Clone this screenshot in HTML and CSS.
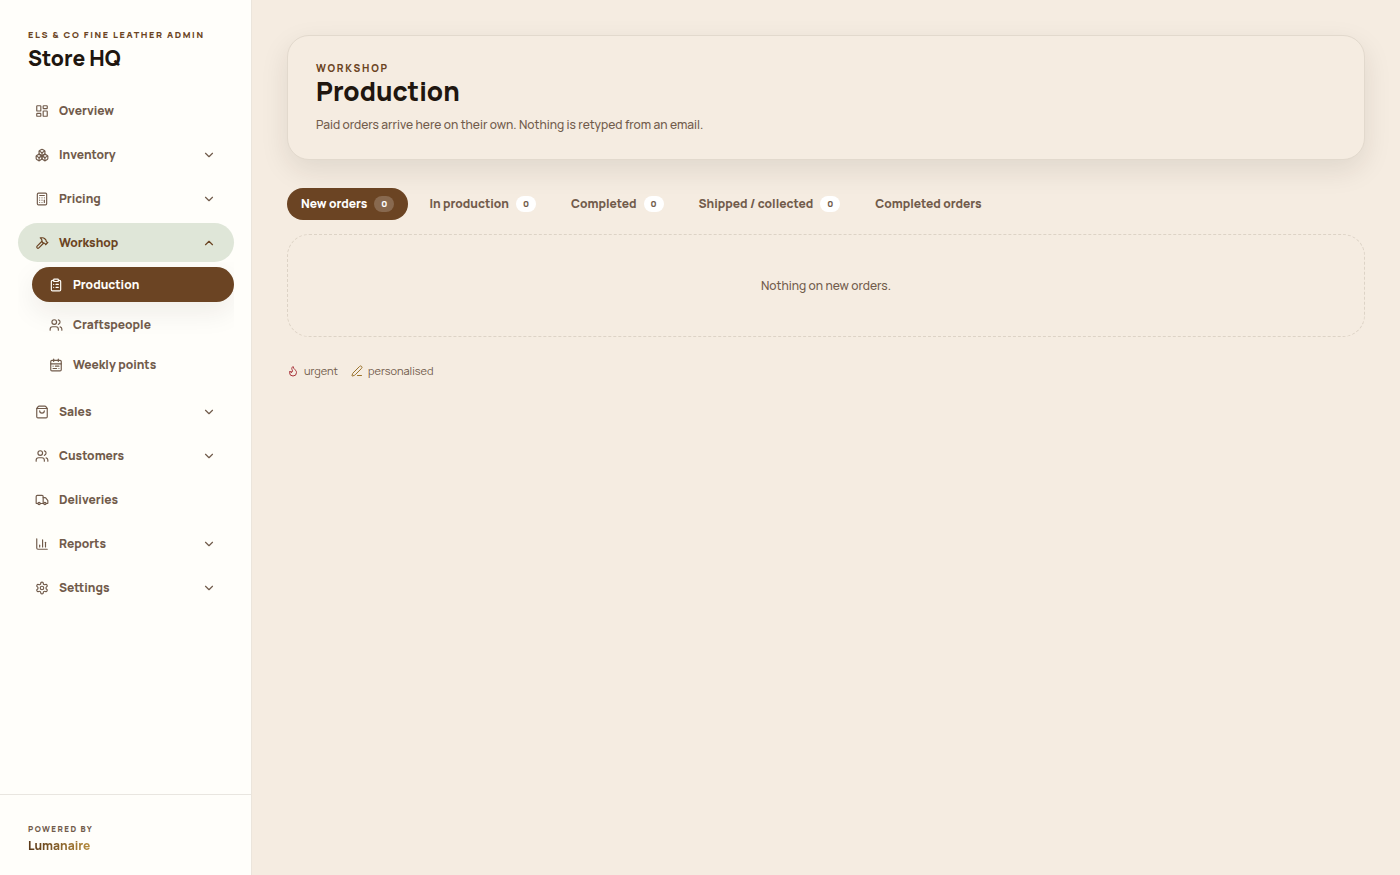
FILE: index.html
```html
<!DOCTYPE html>
<html lang="en">
<head>
  <meta charset="UTF-8">
  <meta name="viewport" content="width=device-width, initial-scale=1.0">
  <title>Production - Store HQ</title>
  <link rel="stylesheet" href="styles.css">
</head>
<body>
  <svg class="sprite" aria-hidden="true">
    <symbol id="i-down" viewBox="0 0 24 24"><path d="m6 9 6 6 6-6"/></symbol>
    <symbol id="i-up" viewBox="0 0 24 24"><path d="m18 15-6-6-6 6"/></symbol>
    <symbol id="i-users" viewBox="0 0 24 24"><path d="M16 21v-2a4 4 0 0 0-4-4H6a4 4 0 0 0-4 4v2"/><circle cx="9" cy="7" r="4"/><path d="M22 21v-2a4 4 0 0 0-3-3.87"/><path d="M16 3.13a4 4 0 0 1 0 7.75"/></symbol>
  </svg>

  <div class="layout">
    <aside class="sidebar">
      <div class="brand">
        <p class="eyebrow">Els &amp; Co Fine Leather Admin</p>
        <p class="brand-name">Store HQ</p>
      </div>

      <nav class="nav" aria-label="Main">
        <a class="nav-item" href="#">
          <svg class="icon" viewBox="0 0 24 24"><rect width="7" height="9" x="3" y="3" rx="1"/><rect width="7" height="5" x="14" y="3" rx="1"/><rect width="7" height="9" x="14" y="12" rx="1"/><rect width="7" height="5" x="3" y="16" rx="1"/></svg>
          <span>Overview</span>
        </a>
        <button class="nav-item" type="button" aria-expanded="false">
          <svg class="icon" viewBox="0 0 24 24"><path d="M2.97 12.92A2 2 0 0 0 2 14.63v3.24a2 2 0 0 0 .97 1.71l3 1.8a2 2 0 0 0 2.06 0L12 19v-5.5l-5-3-4.03 2.42Z"/><path d="m7 16.5-4.74-2.85"/><path d="m7 16.5 5-3"/><path d="M7 16.5v5.17"/><path d="M12 13.5V19l3.97 2.38a2 2 0 0 0 2.06 0l3-1.8a2 2 0 0 0 .97-1.71v-3.24a2 2 0 0 0-.97-1.71L17 10.5l-5 3Z"/><path d="m17 16.5-5-3"/><path d="m17 16.5 4.74-2.85"/><path d="M17 16.5v5.17"/><path d="M7.97 4.42A2 2 0 0 0 7 6.13v4.37l5 3 5-3V6.13a2 2 0 0 0-.97-1.71l-3-1.8a2 2 0 0 0-2.06 0l-3 1.8Z"/><path d="M12 8 7.26 5.15"/><path d="m12 8 4.74-2.85"/><path d="M12 13.5V8"/></svg>
          <span>Inventory</span>
          <svg class="icon chevron"><use href="#i-down"/></svg>
        </button>
        <button class="nav-item" type="button" aria-expanded="false">
          <svg class="icon" viewBox="0 0 24 24"><rect width="16" height="20" x="4" y="2" rx="2"/><path d="M8 6h8"/><path d="M16 14v4"/><path d="M16 10h.01"/><path d="M12 10h.01"/><path d="M8 10h.01"/><path d="M12 14h.01"/><path d="M8 14h.01"/><path d="M12 18h.01"/><path d="M8 18h.01"/></svg>
          <span>Pricing</span>
          <svg class="icon chevron"><use href="#i-down"/></svg>
        </button>
        <button class="nav-item open" type="button" aria-expanded="true">
          <svg class="icon" viewBox="0 0 24 24"><path d="m15 12-8.373 8.373a1 1 0 1 1-3-3L12 9"/><path d="m18 15 4-4"/><path d="m21.5 11.5-1.914-1.914A2 2 0 0 1 19 8.172V7l-2.26-2.26a6 6 0 0 0-4.202-1.756L9 2.96l.92.82A6.18 6.18 0 0 1 12 8.4V10l2 2h1.172a2 2 0 0 1 1.414.586L18.5 14.5"/></svg>
          <span>Workshop</span>
          <svg class="icon chevron"><use href="#i-up"/></svg>
        </button>
        <div class="subnav">
          <a class="nav-item sub active" href="#" aria-current="page">
            <svg class="icon" viewBox="0 0 24 24"><rect width="8" height="4" x="8" y="2" rx="1"/><path d="M16 4h2a2 2 0 0 1 2 2v14a2 2 0 0 1-2 2H6a2 2 0 0 1-2-2V6a2 2 0 0 1 2-2h2"/><path d="M12 11h4"/><path d="M12 16h4"/><path d="M8 11h.01"/><path d="M8 16h.01"/></svg>
            <span>Production</span>
          </a>
          <a class="nav-item sub" href="#">
            <svg class="icon"><use href="#i-users"/></svg>
            <span>Craftspeople</span>
          </a>
          <a class="nav-item sub" href="#">
            <svg class="icon" viewBox="0 0 24 24"><rect width="18" height="18" x="3" y="4" rx="2"/><path d="M16 2v4"/><path d="M3 10h18"/><path d="M8 2v4"/><path d="M17 14h-6"/><path d="M13 18H7"/><path d="M7 14h.01"/><path d="M17 18h.01"/></svg>
            <span>Weekly points</span>
          </a>
        </div>
        <button class="nav-item" type="button" aria-expanded="false">
          <svg class="icon" viewBox="0 0 24 24"><path d="M16 10a4 4 0 0 1-8 0"/><path d="M3.103 6.034h17.794"/><path d="M3.4 5.467a2 2 0 0 0-.4 1.2V20a2 2 0 0 0 2 2h14a2 2 0 0 0 2-2V6.667a2 2 0 0 0-.4-1.2l-2-2.667A2 2 0 0 0 17 2H7a2 2 0 0 0-1.6.8z"/></svg>
          <span>Sales</span>
          <svg class="icon chevron"><use href="#i-down"/></svg>
        </button>
        <button class="nav-item" type="button" aria-expanded="false">
          <svg class="icon"><use href="#i-users"/></svg>
          <span>Customers</span>
          <svg class="icon chevron"><use href="#i-down"/></svg>
        </button>
        <a class="nav-item" href="#">
          <svg class="icon" viewBox="0 0 24 24"><path d="M14 18V6a2 2 0 0 0-2-2H4a2 2 0 0 0-2 2v11a1 1 0 0 0 1 1h2"/><path d="M15 18H9"/><path d="M19 18h2a1 1 0 0 0 1-1v-3.65a1 1 0 0 0-.22-.624l-3.48-4.35A1 1 0 0 0 17.52 8H14"/><circle cx="17" cy="18" r="2"/><circle cx="7" cy="18" r="2"/></svg>
          <span>Deliveries</span>
        </a>
        <button class="nav-item" type="button" aria-expanded="false">
          <svg class="icon" viewBox="0 0 24 24"><path d="M3 3v16a2 2 0 0 0 2 2h16"/><path d="M18 17V9"/><path d="M13 17V5"/><path d="M8 17v-3"/></svg>
          <span>Reports</span>
          <svg class="icon chevron"><use href="#i-down"/></svg>
        </button>
        <button class="nav-item" type="button" aria-expanded="false">
          <svg class="icon" viewBox="0 0 24 24"><path d="M12.22 2h-.44a2 2 0 0 0-2 2v.18a2 2 0 0 1-1 1.73l-.43.25a2 2 0 0 1-2 0l-.15-.08a2 2 0 0 0-2.73.73l-.22.38a2 2 0 0 0 .73 2.73l.15.1a2 2 0 0 1 1 1.72v.51a2 2 0 0 1-1 1.74l-.15.09a2 2 0 0 0-.73 2.73l.22.38a2 2 0 0 0 2.73.73l.15-.08a2 2 0 0 1 2 0l.43.25a2 2 0 0 1 1 1.73V20a2 2 0 0 0 2 2h.44a2 2 0 0 0 2-2v-.18a2 2 0 0 1 1-1.73l.43-.25a2 2 0 0 1 2 0l.15.08a2 2 0 0 0 2.73-.73l.22-.39a2 2 0 0 0-.73-2.73l-.15-.08a2 2 0 0 1-1-1.74v-.5a2 2 0 0 1 1-1.74l.15-.09a2 2 0 0 0 .73-2.73l-.22-.38a2 2 0 0 0-2.73-.73l-.15.08a2 2 0 0 1-2 0l-.43-.25a2 2 0 0 1-1-1.73V4a2 2 0 0 0-2-2z"/><circle cx="12" cy="12" r="3"/></svg>
          <span>Settings</span>
          <svg class="icon chevron"><use href="#i-down"/></svg>
        </button>
      </nav>

      <div class="powered">
        <p class="powered-label">Powered by</p>
        <a class="powered-name" href="#">Lumanaire</a>
      </div>
    </aside>

    <main class="main">
      <header class="page-head">
        <p class="eyebrow large">Workshop</p>
        <h1>Production</h1>
        <p class="lead">Paid orders arrive here on their own. Nothing is retyped from an email.</p>
      </header>

      <div class="tabs">
        <button class="tab selected" type="button">New orders <span class="count">0</span></button>
        <button class="tab" type="button">In production <span class="count">0</span></button>
        <button class="tab" type="button">Completed <span class="count">0</span></button>
        <button class="tab" type="button">Shipped / collected <span class="count">0</span></button>
        <button class="tab" type="button">Completed orders</button>
      </div>

      <div class="empty">Nothing on new orders.</div>

      <div class="legend">
        <span class="legend-item">
          <svg class="icon urgent" viewBox="0 0 24 24"><path d="M8.5 14.5A2.5 2.5 0 0 0 11 12c0-1.38-.5-2-1-3-1.072-2.143-.224-4.054 2-6 .5 2.5 2 4.9 4 6.5 2 1.6 3 3.5 3 5.5a7 7 0 1 1-14 0c0-1.153.433-2.294 1-3a2.5 2.5 0 0 0 2.5 2.5z"/></svg>
          urgent
        </span>
        <span class="legend-item">
          <svg class="icon personal" viewBox="0 0 24 24"><path d="M13 21h8"/><path d="M21.174 6.812a1 1 0 0 0-3.986-3.987L3.842 16.174a2 2 0 0 0-.5.83l-1.321 4.352a.5.5 0 0 0 .623.622l4.353-1.32a2 2 0 0 0 .83-.497z"/></svg>
          personalised
        </span>
      </div>
    </main>
  </div>
</body>
</html>
```
FILE: styles.css
```css
* {
  box-sizing: border-box;
}

body {
  margin: 0;
  background: #f5ece1;
  color: #715b4b;
  font-family: Manrope, Inter, "Liberation Sans", sans-serif;
  font-size: 12px;
  font-weight: 500;
  line-height: 18px;
}

p, h1 {
  margin: 0;
}

button {
  font: inherit;
  color: inherit;
  border: none;
  background: none;
  cursor: pointer;
}

a {
  color: inherit;
  text-decoration: none;
}

.sprite {
  display: none;
}

.icon {
  width: 14px;
  height: 14px;
  flex: none;
  fill: none;
  stroke: currentColor;
  stroke-width: 2;
  stroke-linecap: round;
  stroke-linejoin: round;
}

.layout {
  display: flex;
  min-height: 100vh;
}

/* sidebar */
.sidebar {
  display: flex;
  flex-direction: column;
  width: 252px;
  flex: none;
  background: #fffefa;
  border-right: 1px solid #ebe5dc;
}

.brand {
  padding: 28px 28px 17px;
}

.eyebrow {
  color: #6b4423;
  font-size: 9px;
  font-weight: 800;
  line-height: 14px;
  letter-spacing: 0.18em;
  text-transform: uppercase;
  white-space: nowrap;
}

.large {
  font-size: 10px;
}

.brand-name {
  color: #20160f;
  font-size: 21px;
  font-weight: 800;
  line-height: 32px;
}

.nav {
  display: flex;
  flex-direction: column;
  gap: 5px;
  flex: 1;
  padding: 0 17px 20px 18px;
}

.nav-item {
  display: flex;
  align-items: center;
  gap: 10px;
  width: 100%;
  height: 39px;
  padding: 0 18px 0 17px;
  border-radius: 20px;
  font-weight: 800;
  text-align: left;
}

.chevron {
  margin-left: auto;
}

.open {
  background: #dfe6d8;
  color: #6b4423;
}

.subnav {
  display: flex;
  flex-direction: column;
  gap: 5px;
  margin-top: -5px;
  padding: 5px 0 5px 14px;
  overflow: hidden;
}

.sub {
  height: 35px;
}

.active {
  background: #6b4423;
  color: #fffefa;
  box-shadow: 0 10px 28px rgba(38, 30, 16, 0.08);
}

.powered {
  padding: 28px 28px 18px;
  border-top: 1px solid #e9e6e0;
}

.powered-label {
  font-size: 8px;
  font-weight: 800;
  line-height: 12px;
  letter-spacing: 0.18em;
  text-transform: uppercase;
}

.powered-name {
  display: inline-block;
  background: linear-gradient(90deg, #5a3818, #b58a3c);
  background-clip: text;
  -webkit-background-clip: text;
  color: transparent;
  font-weight: 800;
  line-height: 22px;
}

/* content */
.main {
  flex: 1;
  min-width: 0;
  padding: 35px;
}

.page-head {
  padding: 25px 28px;
  border: 1px solid #e2d9cd;
  border-radius: 22px;
  background: #f5ece1;
  box-shadow: 0 10px 28px rgba(38, 30, 16, 0.1);
}

.page-head h1 {
  color: #20160f;
  font-size: 26px;
  font-weight: 800;
  line-height: 32px;
}

.lead {
  margin-top: 9px;
}

.tabs {
  display: flex;
  flex-wrap: wrap;
  gap: 7px;
  margin: 28px 0 14px;
}

.tab {
  display: flex;
  align-items: center;
  gap: 7px;
  height: 32px;
  padding: 0 14px;
  border-radius: 16px;
  font-weight: 800;
}

.selected {
  background: #6b4423;
  color: #ffffff;
}

.count {
  min-width: 20px;
  border-radius: 8px;
  background: #ffffff;
  color: #715b4b;
  font-size: 9px;
  line-height: 16px;
  text-align: center;
}

.selected .count {
  background: rgba(255, 255, 255, 0.2);
  color: #ffffff;
}

.empty {
  padding: 42px 28px;
  border: 1px dashed #ddd3c6;
  border-radius: 22px;
  line-height: 17px;
  text-align: center;
}

.legend {
  display: flex;
  gap: 13px;
  margin-top: 25px;
  font-size: 11px;
  font-weight: 400;
}

.legend-item {
  display: flex;
  align-items: center;
  gap: 5px;
}

.legend .icon {
  width: 12px;
  height: 12px;
}

.urgent {
  color: #a8323a;
}

.personal {
  color: #9a722c;
}
```
